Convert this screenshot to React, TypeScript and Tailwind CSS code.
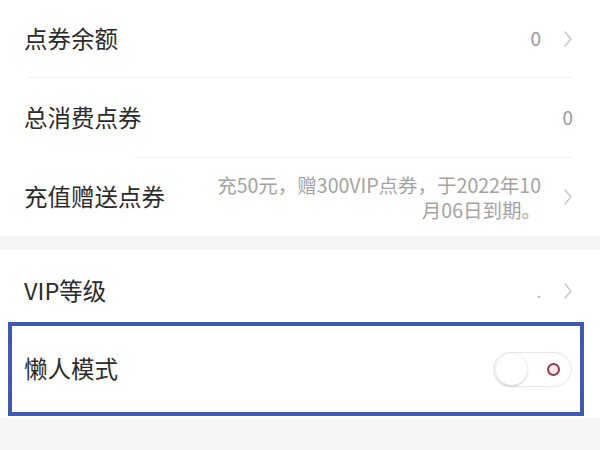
const font = { fontFamily: '"Noto Sans CJK SC", "Noto Sans", sans-serif' }

function Chevron() {
  return (
    <svg width="10" height="18" viewBox="0 0 10 18" className="shrink-0">
      <polyline
        points="2,2 8,9 2,16"
        fill="none"
        stroke="#c8c8c8"
        strokeWidth="1.6"
        strokeLinecap="round"
        strokeLinejoin="round"
      />
    </svg>
  )
}

function Row({
  label,
  value,
  chevron = true,
  className = "",
}: {
  label: string
  value?: React.ReactNode
  chevron?: boolean
  className?: string
}) {
  return (
    <div className={`flex items-center justify-between pl-6 pr-[27px] ${className}`}>
      <span className="text-[23.5px] leading-none text-[#2b2b2b]">{label}</span>
      <div className="flex items-center gap-[22px]">
        {value}
        {chevron && <Chevron />}
      </div>
    </div>
  )
}

function LazySwitch() {
  return (
    <div className="flex h-[35px] w-[79px] items-center justify-between rounded-full border border-[#e6e6e6] bg-white pl-[2px] pr-[11px] shadow-[inset_0_0_2px_rgba(0,0,0,0.04)]">
      <div className="h-[31px] w-[31px] rounded-full bg-white shadow-[0_1px_3px_rgba(0,0,0,0.22)]" />
      <div className="h-[13px] w-[13px] rounded-full border-2 border-[#8e3c4c] bg-[#fbe6ea]" />
    </div>
  )
}

export default function App() {
  return (
    <div className="h-[450px] w-[600px] overflow-hidden bg-[#f6f6f8]" style={font}>
      <div className="bg-white">
        <Row
          label="点券余额"
          className="h-[77px]"
          value={<span className="text-[19px] text-[#9a9a9a]">0</span>}
        />
        <div className="ml-[28px] mr-[28px] h-px bg-[#f0f0f0]" />
        <Row
          label="总消费点券"
          className="h-[79px]"
          chevron={false}
          value={<span className="text-[19px] text-[#9a9a9a]">0</span>}
        />
        <div className="ml-[135px] mr-[28px] h-px bg-[#f0f0f0]" />
        <Row
          label="充值赠送点券"
          className="h-[78px]"
          value={
            <div className="flex w-[340px] flex-col items-end gap-[6px] text-[19.5px] leading-none text-[#a3a3a3]">
              <span>充50元，赠300VIP点券，于2022年10</span>
              <span>月06日到期。</span>
            </div>
          }
        />
      </div>
      <div className="h-[14px]" />
      <div className="bg-white pb-[2px]">
        <Row
          label="VIP等级"
          className="h-[72px] pt-[10px]"
          value={<span className="text-[16px] text-[#b0b0b0]">.</span>}
        />
        <div className="ml-[8px] mr-[16px] flex h-[94px] items-center justify-between border-4 border-[#4058b8] pl-[12px] pr-[8px]">
          <span className="text-[23.5px] leading-none text-[#2b2b2b]">懒人模式</span>
          <LazySwitch />
        </div>
      </div>
    </div>
  )
}
